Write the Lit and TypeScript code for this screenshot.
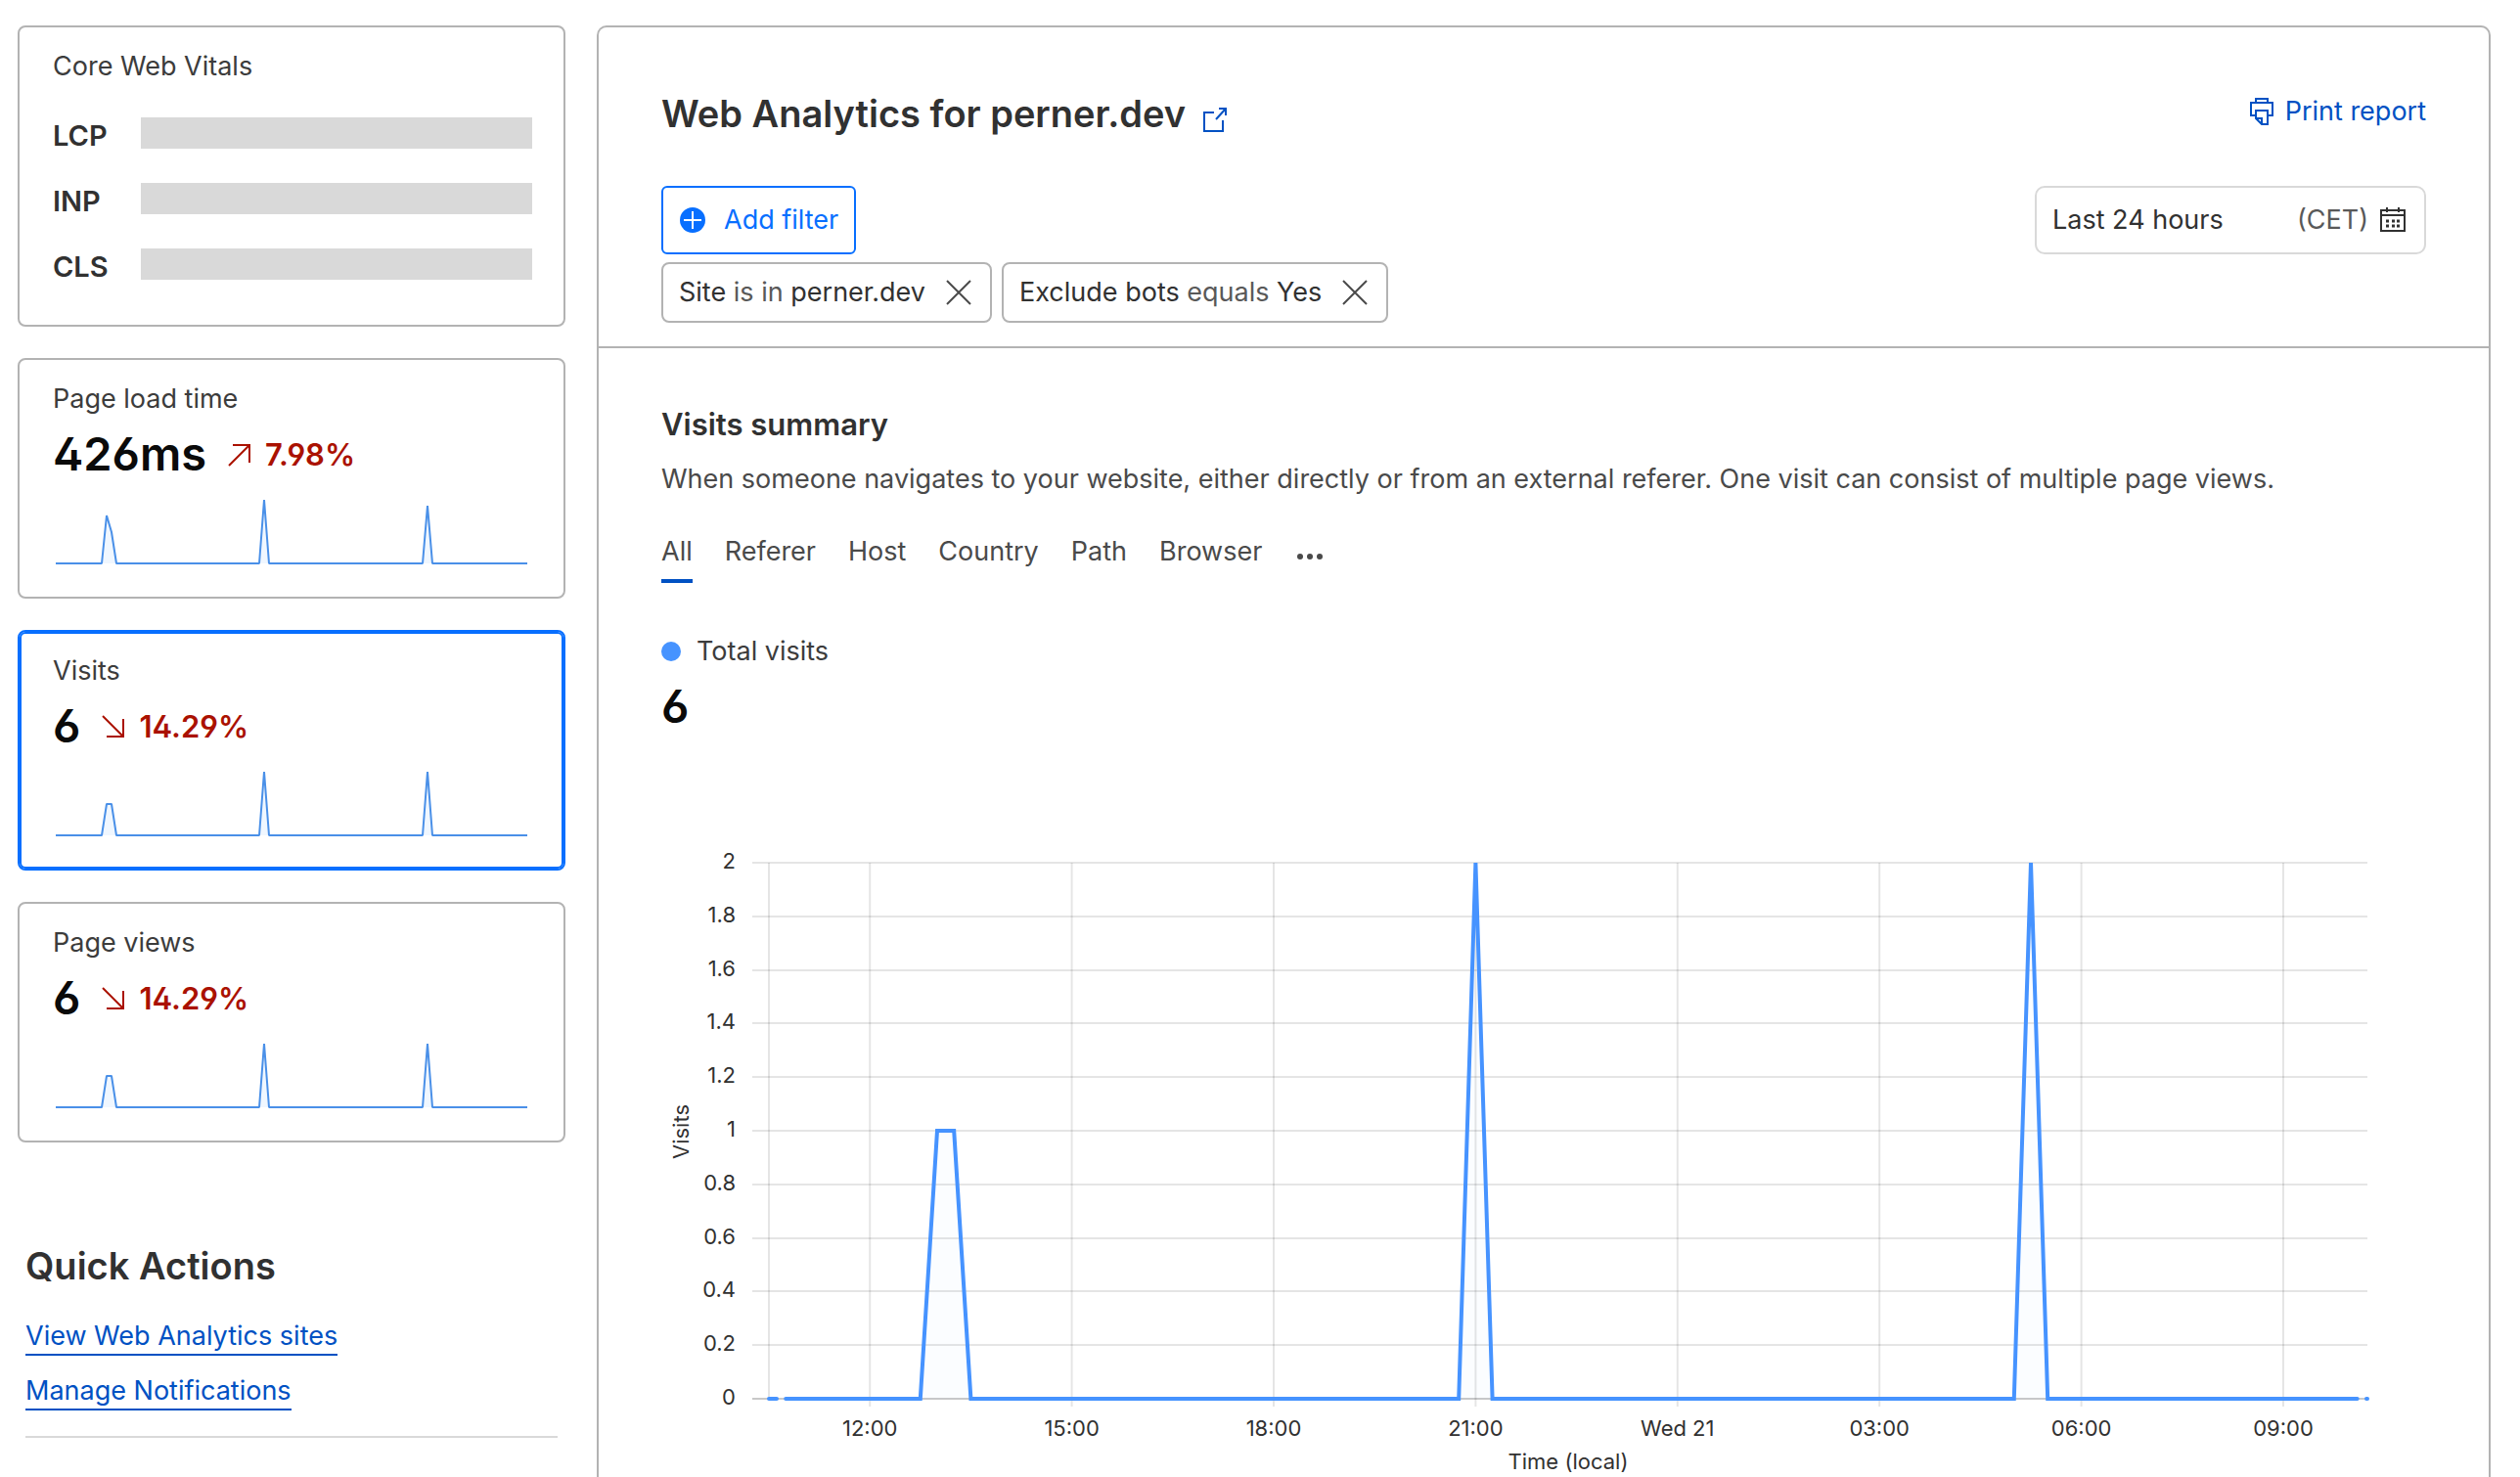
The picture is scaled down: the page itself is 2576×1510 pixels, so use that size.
import { LitElement, html, svg, css } from "lit";
import { customElement, property, state } from "lit/decorators.js";
import { classMap } from "lit/directives/class-map.js";

interface Metric {
  id: string;
  label: string;
  value: string;
  change: string;
  trend: "up" | "down";
  points: [number, number][];
}

const VISIT_POINTS: [number, number][] = [
  [3, 78], [50, 78], [55, 46], [60, 46], [65, 78], [211, 78], [216, 13],
  [221, 78], [378, 78], [383, 13], [388, 78], [485, 78],
];

const METRICS: Metric[] = [
  {
    id: "load",
    label: "Page load time",
    value: "426ms",
    change: "7.98%",
    trend: "up",
    points: [
      [3, 78], [50, 78], [55, 29], [60, 46], [65, 78], [211, 78], [216, 13],
      [221, 78], [378, 78], [383, 19], [388, 78], [485, 78],
    ],
  },
  { id: "visits", label: "Visits", value: "6", change: "14.29%", trend: "down", points: VISIT_POINTS },
  { id: "views", label: "Page views", value: "6", change: "14.29%", trend: "down", points: VISIT_POINTS },
];

@customElement("metric-card")
export class MetricCard extends LitElement {
  @property({ attribute: false }) metric!: Metric;
  @property({ type: Boolean }) selected = false;

  static styles = css`
    :host { display: block; }
    .card {
      display: flex;
      flex-direction: column;
      align-items: stretch;
      width: 100%;
      box-sizing: border-box;
      margin: 0;
      padding: 20px 32px 32px 34px;
      border: 2px solid #b3b3b3;
      border-radius: 8px;
      background: #fff;
      font: inherit;
      color: #3c3c3c;
      text-align: left;
      cursor: pointer;
    }
    .selected {
      border-color: #086fff;
      box-shadow: inset 0 0 0 2px #086fff;
    }
    .label { line-height: 40px; }
    .figures {
      display: flex;
      align-items: center;
      gap: 22px;
      margin-top: 8px;
    }
    .value {
      font-size: 47px;
      line-height: 56px;
      font-weight: 600;
      color: #0a0a0a;
    }
    .change {
      display: flex;
      align-items: center;
      gap: 14px;
      padding-top: 2px;
      font-size: 31px;
      line-height: 40px;
      font-weight: 600;
      color: #aa1100;
    }
    .value, .change { font-feature-settings: "cv02", "cv03", "cv04"; }
    .arrow { width: 24px; height: 24px; }
    .spark { display: block; width: 100%; height: 80px; margin-top: 6px; }
  `;

  render() {
    const m = this.metric;
    const line = m.points.map((p) => p.join(",")).join(" ");
    return html`
      <button class=${classMap({ card: true, selected: this.selected })} aria-pressed=${this.selected}>
        <span class="label">${m.label}</span>
        <span class="figures">
          <span class="value">${m.value}</span>
          <span class="change">
            <svg class="arrow" viewBox="0 0 24 24" fill="none" stroke="currentColor" stroke-width="2" aria-hidden="true">
              ${m.trend === "up"
                ? svg`<path d="M1 23 22 2M5 2H22V20" />`
                : svg`<path d="M1 1 22 22M5 22H22V4" />`}
            </svg>
            ${m.change}
          </span>
        </span>
        <svg class="spark" viewBox="0 0 490 80" aria-hidden="true">
          <polygon points=${line} fill="#4693ff" fill-opacity="0.08" />
          <polyline points=${line} fill="none" stroke="#4a90e8" stroke-width="2" stroke-linejoin="bevel" />
        </svg>
      </button>
    `;
  }
}

/* Chart geometry, in units of the drawing's view box. */
const PLOT = { left: 110, right: 1744, top: 22, bottom: 570, hour: 68.8, start: 10.5 };

@customElement("visits-chart")
export class VisitsChart extends LitElement {
  static styles = css`
    :host { display: block; }
    .chart { display: block; width: 100%; }
    .grid { stroke: #000; stroke-opacity: 0.1; stroke-width: 2; }
    .axis { stroke: #c8c8c8; stroke-width: 2; }
    .tick { font-size: 22px; fill: #313131; }
    .end { text-anchor: end; }
    .middle { text-anchor: middle; }
    .series { fill: none; stroke: #4693ff; stroke-width: 4; stroke-linecap: round; }
    .area { fill: #4693ff; fill-opacity: 0.02; }
  `;

  private x(hour: number) {
    return PLOT.left + (hour - PLOT.start) * PLOT.hour;
  }

  private y(value: number) {
    return PLOT.bottom - (value / 2) * (PLOT.bottom - PLOT.top);
  }

  render() {
    const values = Array.from({ length: 11 }, (_, i) => i / 5);
    const hours: [number, string][] = [
      [12, "12:00"], [15, "15:00"], [18, "18:00"], [21, "21:00"],
      [24, "Wed 21"], [27, "03:00"], [30, "06:00"], [33, "09:00"],
    ];
    const series: [number, number][] = [
      [10.75, 0], [12.75, 0], [13, 1], [13.25, 1], [13.5, 0], [20.75, 0], [21, 2],
      [21.25, 0], [29, 0], [29.25, 2], [29.5, 0], [34.1, 0],
    ];
    const line = series.map(([h, v]) => `${this.x(h)},${this.y(v)}`).join(" ");
    return html`
      <svg class="chart" viewBox="0 0 1804 650" role="img" aria-label="Visits by time">
        <clipPath id="plot"><rect x="100" y=${PLOT.top} width="1660" height="560" /></clipPath>
        ${values.map((v) => svg`
          <line class=${v === 0 ? "axis" : "grid"} x1="93" x2=${PLOT.right} y1=${Math.round(this.y(v))} y2=${Math.round(this.y(v))} />
          <text class="tick end" x="76" y=${Math.round(this.y(v)) + 6}>${v}</text>`)}
        <line class="grid" x1=${PLOT.left} x2=${PLOT.left} y1=${PLOT.top} y2=${PLOT.bottom} />
        ${hours.map(([h, text]) => svg`
          <line class="grid" x1=${this.x(h)} x2=${this.x(h)} y1=${PLOT.top} y2="578" />
          <text class="tick middle" x=${this.x(h)} y="608">${text}</text>`)}
        <text class="tick middle" x="927" y="642">Time (local)</text>
        <text class="tick middle" transform="translate(28 297) rotate(-90)">Visits</text>
        <g clip-path="url(#plot)">
          <polygon class="area" points=${line} />
          <polyline class="series" points=${line} />
          <path class="series" d="M110 570H118M1743 570H1744" />
        </g>
      </svg>
    `;
  }
}

@customElement("app-root")
export class AppRoot extends LitElement {
  @state() private selected = "visits";
  @state() private tab = "All";

  static styles = css`
    :host {
      display: block;
      font-family: Inter, "Liberation Sans", sans-serif;
      font-size: 27px;
      line-height: 40px;
      color: #313131;
      background: #fff;
    }
    .page {
      display: grid;
      grid-template-columns: 560px minmax(0, 1fr);
      gap: 32px;
      min-height: 100vh;
      box-sizing: border-box;
      padding: 26px 30px 0 18px;
    }
    .sidebar { display: flex; flex-direction: column; gap: 32px; }
    .vitals {
      padding: 20px 32px 26px 34px;
      border: 2px solid #b3b3b3;
      border-radius: 8px;
    }
    .vitals-title { margin: 0 0 17px; font-size: 27px; font-weight: 400; color: #3c3c3c; }
    .vital {
      display: grid;
      grid-template-columns: 90px 1fr;
      align-items: center;
      height: 67px;
    }
    .vital-name { font-size: 29px; font-weight: 600; }
    .vital-bar { height: 32px; margin-bottom: 5px; background: #d9d9d9; }
    .quick {
      display: flex;
      flex-direction: column;
      align-items: flex-start;
      gap: 18px;
      margin: 70px 8px 0;
      padding-bottom: 26px;
      border-bottom: 2px solid #d9d9d9;
    }
    .quick-title { margin: 0 0 12px; font-size: 38px; line-height: 48px; font-weight: 600; }
    .quick-link {
      line-height: 36px;
      color: #0051c3;
      text-decoration: none;
      border-bottom: 2px solid #0051c3;
    }
    .panel {
      border: 2px solid #b3b3b3;
      border-bottom: 0;
      border-radius: 10px 10px 0 0;
    }
    .head { padding: 62px 64px 24px; border-bottom: 2px solid #b3b3b3; }
    .row { display: flex; justify-content: space-between; align-items: flex-start; }
    .title {
      display: flex;
      align-items: center;
      gap: 18px;
      margin: 0;
      font-size: 38px;
      line-height: 52px;
      font-weight: 600;
    }
    .title-link { display: flex; padding-top: 12px; color: #0051c3; }
    .icon { display: block; flex: none; }
    .print {
      display: flex;
      align-items: center;
      gap: 12px;
      padding: 0;
      border: 0;
      background: none;
      font: inherit;
      line-height: 48px;
      color: #0051c3;
    }
    .controls { margin-top: 48px; }
    .add {
      display: flex;
      align-items: center;
      gap: 19px;
      height: 70px;
      padding: 0 16px 0 17px;
      border: 2px solid #086fff;
      border-radius: 6px;
      background: #fff;
      font: inherit;
      color: #086fff;
    }
    .range {
      display: flex;
      align-items: center;
      gap: 12px;
      width: 400px;
      height: 70px;
      padding: 0 19px 0 16px;
      border: 2px solid #d9d9d9;
      border-radius: 10px;
      background: #fff;
      font: inherit;
      color: #313131;
      text-align: left;
    }
    .range-name { flex: 1; }
    .muted { color: #595959; }
    .chips { display: flex; gap: 10px; margin-top: 8px; }
    .chip {
      display: flex;
      align-items: center;
      gap: 20px;
      height: 58px;
      padding: 0 18px 0 16px;
      border: 2px solid #b3b3b3;
      border-radius: 8px;
    }
    .remove { padding: 0; border: 0; background: none; color: #4a4a4a; }
    .body { padding: 56px 64px 0; }
    .summary { margin: 0; font-size: 31px; line-height: 44px; font-weight: 600; }
    .text { margin: 14px 0 0; color: #4a4a4a; }
    .tabs { display: flex; gap: 33px; margin-top: 34px; }
    .tab {
      padding: 0 0 8px;
      border: 0;
      border-bottom: 4px solid transparent;
      background: none;
      font: inherit;
      color: #4a4a4a;
    }
    .current { border-bottom-color: #0051c3; }
    .more { display: flex; align-items: center; padding-top: 10px; }
    .legend { display: flex; align-items: center; gap: 16px; margin-top: 50px; color: #3c3c3c; }
    .dot { width: 20px; height: 20px; border-radius: 50%; background: #4693ff; }
    .total {
      margin: 8px 0 110px;
      font-size: 47px;
      line-height: 56px;
      font-weight: 600;
      color: #0a0a0a;
      font-feature-settings: "cv03";
    }
  `;

  private chip(subject: string, operator: string, value: string) {
    return html`
      <div class="chip">
        <span>${subject} <span class="muted">${operator}</span> ${value}</span>
        <button class="remove" aria-label="Remove filter">
          <svg class="icon" width="28" height="28" viewBox="0 0 28 28" fill="none" stroke="currentColor" stroke-width="2" aria-hidden="true">
            <path d="M2 2 26 26M26 2 2 26" />
          </svg>
        </button>
      </div>
    `;
  }

  render() {
    return html`
      <div class="page">
        <aside class="sidebar">
          <section class="vitals">
            <h2 class="vitals-title">Core Web Vitals</h2>
            ${["LCP", "INP", "CLS"].map((name) => html`
              <div class="vital"><span class="vital-name">${name}</span><span class="vital-bar"></span></div>`)}
          </section>
          ${METRICS.map((m) => html`
            <metric-card .metric=${m} ?selected=${m.id === this.selected} @click=${() => (this.selected = m.id)}></metric-card>`)}
          <nav class="quick">
            <h2 class="quick-title">Quick Actions</h2>
            <a class="quick-link" href="#sites">View Web Analytics sites</a>
            <a class="quick-link" href="#notifications">Manage Notifications</a>
          </nav>
        </aside>
        <main class="panel">
          <header class="head">
            <div class="row">
              <h1 class="title">
                Web Analytics for perner.dev
                <a class="title-link" href="#site" aria-label="Open site">
                  <svg class="icon" width="24" height="26" viewBox="0 0 24 26" fill="none" stroke="currentColor" stroke-width="2" aria-hidden="true">
                    <path d="M11 6H1V25H20V14M13 13 23 2M16 2H23V9" />
                  </svg>
                </a>
              </h1>
              <button class="print">
                <svg class="icon" width="24" height="28" viewBox="0 0 24 28" fill="none" stroke="currentColor" stroke-width="2" aria-hidden="true">
                  <path d="M6 5V1H18V5M6 18H1V5H23V18H18M6 13H18V27H12L6 21ZM7 21H12V27" />
                </svg>
                Print report
              </button>
            </div>
            <div class="row controls">
              <button class="add">
                <svg class="icon" width="26" height="26" viewBox="0 0 26 26" aria-hidden="true">
                  <circle cx="13" cy="13" r="13" fill="currentColor" />
                  <path d="M13 4V22M4 13H22" stroke="#fff" stroke-width="2" />
                </svg>
                Add filter
              </button>
              <button class="range">
                <span class="range-name">Last 24 hours</span>
                <span class="muted">(CET)</span>
                <svg class="icon" width="26" height="26" viewBox="0 0 26 26" fill="none" stroke="currentColor" stroke-width="2" aria-hidden="true">
                  <path d="M1 3H25V24H1ZM1 8H25M7 0V5M19 0V5" />
                  <path d="M6 14H9M12 14H15M17 14H20M6 19H9M12 19H15M17 19H20" stroke-width="3" />
                </svg>
              </button>
            </div>
            <div class="chips">
              ${this.chip("Site", "is in", "perner.dev")}
              ${this.chip("Exclude bots", "equals", "Yes")}
            </div>
          </header>
          <section class="body">
            <h2 class="summary">Visits summary</h2>
            <p class="text">
              When someone navigates to your website, either directly or from an external referer. One visit can consist of multiple page views.
            </p>
            <div class="tabs" role="tablist">
              ${["All", "Referer", "Host", "Country", "Path", "Browser"].map((t) => html`
                <button role="tab" aria-selected=${t === this.tab} class=${classMap({ tab: true, current: t === this.tab })}
                  @click=${() => (this.tab = t)}>${t}</button>`)}
              <button class="tab more" aria-label="More">
                <svg class="icon" width="32" height="8" viewBox="0 0 32 8" fill="currentColor" aria-hidden="true">
                  <circle cx="6" cy="4" r="3" /><circle cx="16" cy="4" r="3" /><circle cx="26" cy="4" r="3" />
                </svg>
              </button>
            </div>
            <div class="legend"><span class="dot"></span>Total visits</div>
            <p class="total">6</p>
            <visits-chart></visits-chart>
          </section>
        </main>
      </div>
    `;
  }
}
